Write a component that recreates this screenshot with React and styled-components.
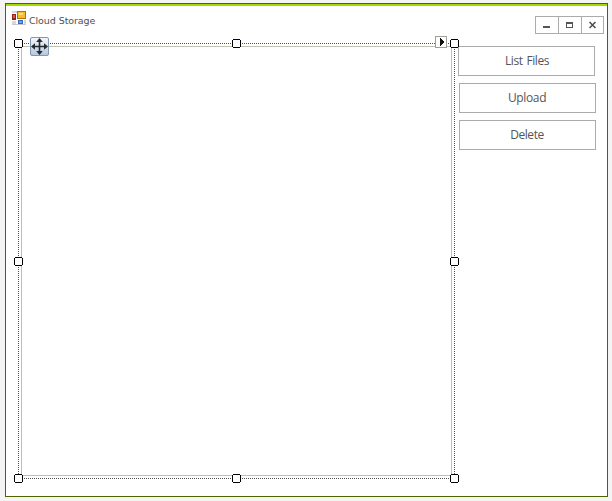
import React from "react";
import styled, { createGlobalStyle } from "styled-components";

const GlobalStyle = createGlobalStyle`
  *, *::before, *::after { box-sizing: border-box; }
  body { margin: 0; background: #f4f4f4; }
`;

const Desktop = styled.main`
  width: 612px;
  height: 501px;
  padding: 3px 4px 4px 5px;
  background: #f4f4f4;
`;

const FormWindow = styled.section`
  display: flex;
  flex-direction: column;
  height: 494px;
  width: 603px;
  border: 1px solid #4e6400;
  background: #fff;
`;

const Accent = styled.div`
  flex: none;
  height: 2px;
  background: #a5d900;
`;

const TitleBar = styled.header`
  display: flex;
  flex: none;
  height: 33px;
  padding: 0 3px 0 6px;
`;

const FormIcon = styled.svg`
  flex: none;
  width: 14px;
  height: 14px;
  margin-top: 5px;
`;

const Title = styled.h1`
  flex: 1;
  margin: 6px 0 0 3px;
  font: 400 9.5px/17px "DejaVu Sans", sans-serif;
  letter-spacing: -0.08px;
  color: #505050;
  white-space: nowrap;
`;

const Controls = styled.div`
  display: flex;
  width: 69px;
  height: 18px;
  margin-top: 10px;
`;

const ControlButton = styled.button`
  display: flex;
  width: 23px;
  height: 18px;
  padding: 0;
  border: 1px solid #ababab;
  border-right-width: ${(p) => (p.$last ? "1px" : "0")};
  background: #fff;

  svg { display: block; flex: none; width: 21px; height: 16px; }
`;

const Body = styled.div`
  display: flex;
  flex: 1;
  padding: 0 0 13px 8px;
`;

const Selection = styled.div`
  position: relative;
  flex: none;
  width: 441px;
  height: 444px;
  padding: 7px;
`;

const ListView = styled.div`
  width: 431px;
  height: 430px;
  border: 1px solid #bec0b2;
  background: #fff;
`;

const Adorners = styled.svg`
  position: absolute;
  inset: 0;
  width: 445px;
  height: 444px;
  overflow: visible;
`;

const Actions = styled.nav`
  display: flex;
  flex-direction: column;
  gap: 7px;
  padding: 7px 0 0 3px;
`;

const ActionButton = styled.button`
  width: 137px;
  height: 30px;
  margin-left: ${(p) => p.$offset}px;
  padding: 0 ${(p) => p.$offset}px 1px ${(p) => 1 - p.$offset}px;
  border: 1px solid #ababab;
  background: #fff;
  font: 400 12px/27px "Open Sans", "Noto Sans", sans-serif;
  letter-spacing: ${(p) => p.$tracking}px;
  word-spacing: 1.5px;
  color: #555;
`;

const HANDLES = [
  [4, 4], [222, 4], [440, 4],
  [4, 222], [440, 222],
  [4, 439], [222, 439], [440, 439],
];

const ACTIONS = [
  { label: "List Files", offset: 0, tracking: -0.48 },
  { label: "Upload", offset: 1, tracking: -0.35 },
  { label: "Delete", offset: 1, tracking: -0.45 },
];

function WinFormsIcon() {
  return (
    <FormIcon viewBox="0 0 14 14" shapeRendering="crispEdges" aria-hidden="true">
      <path fill="#d8d8d8" d="M0 0h4v2H0zM0 10h4v3H0zM12 9h2v4h-2z" />
      <path fill="#c8c8c8" d="M4 0h1v2H4zM0 13h14v1H0z" />
      <path fill="#972019" d="M0 3h4v6H0z" />
      <path fill="#db5446" d="M1 4h2v3H1z" />
      <path fill="#ae7600" d="M5 0h9v8H5z" />
      <path fill="#f6bb2e" d="M6 1h7v6H6z" />
      <path fill="#ffdd77" d="M7 2h4v2H7z" />
      <path fill="#366bc4" d="M6 9h5v4H6z" />
      <path fill="#6e9ff0" d="M7 10h3v2H7z" />
    </FormIcon>
  );
}

function SelectionAdorners() {
  return (
    <Adorners shapeRendering="crispEdges" aria-hidden="true">
      <path
        d="M4 4.5H441M4 439.5H441M4.5 4V440M440.5 4V440"
        fill="none" stroke="#505050" strokeDasharray="1 1"
      />
      {HANDLES.map(([x, y]) => (
        <g key={`${x}-${y}`} transform={`translate(${x - 4} ${y - 4})`}>
          <path fill="#fff" d="M1 1h7v7H1z" />
          <path fill="#000" d="M1 0h7v1H1zM1 8h7v1H1zM0 1h1v7H0zM8 1h1v7H8z" />
        </g>
      ))}
      <g transform="translate(16 -2)" shapeRendering="auto">
        <defs>
          <linearGradient id="grip" x1="0" y1="0" x2="0" y2="1">
            <stop offset="0" stopColor="#f4f7fb" />
            <stop offset="1" stopColor="#b4c6df" />
          </linearGradient>
        </defs>
        <rect x=".5" y=".5" width="18" height="18" rx="1.5" fill="url(#grip)" stroke="#8396b1" />
        <path
          fill="#252930"
          d="M9.500 1l3.300 4h-2.500v3.700h3.700V6.200l4 3.300-4 3.300v-2.500h-3.700v3.700h2.500l-3.300 4-3.300-4h2.500v-3.700H5v2.500L1 9.500l4-3.300v2.500h3.700V5H6.200z"
        />
      </g>
      <g transform="translate(421 -3)">
        <path fill="#9f9f9c" d="M0 0h12v12H0z" />
        <path fill="#fff" d="M1 1h10v10H1z" />
        <path fill="#111" d="M5 2h1v8H5zM6 3h1v6H6zM7 4h1v4H7zM8 5h1v2H8z" />
      </g>
    </Adorners>
  );
}

export default function App() {
  return (
    <>
      <GlobalStyle />
      <Desktop>
        <FormWindow>
          <Accent />
          <TitleBar>
            <WinFormsIcon />
            <Title>Cloud Storage</Title>
            <Controls>
              <ControlButton aria-label="Minimize">
                <svg shapeRendering="crispEdges"><path fill="#555" d="M7 9h7v2H7z" /></svg>
              </ControlButton>
              <ControlButton aria-label="Maximize">
                <svg shapeRendering="crispEdges">
                  <path fill="#555" fillRule="evenodd" d="M7 5h7v6H7zM8 7v3h5V7z" />
                </svg>
              </ControlButton>
              <ControlButton aria-label="Close" $last>
                <svg><path fill="none" stroke="#4c4c4c" strokeWidth="1.5" d="M7.500 5l6 6M13.500 5l-6 6" /></svg>
              </ControlButton>
            </Controls>
          </TitleBar>
          <Body>
            <Selection>
              <ListView />
              <SelectionAdorners />
            </Selection>
            <Actions>
              {ACTIONS.map((a) => (
                <ActionButton key={a.label} $offset={a.offset} $tracking={a.tracking}>
                  {a.label}
                </ActionButton>
              ))}
            </Actions>
          </Body>
        </FormWindow>
      </Desktop>
    </>
  );
}
